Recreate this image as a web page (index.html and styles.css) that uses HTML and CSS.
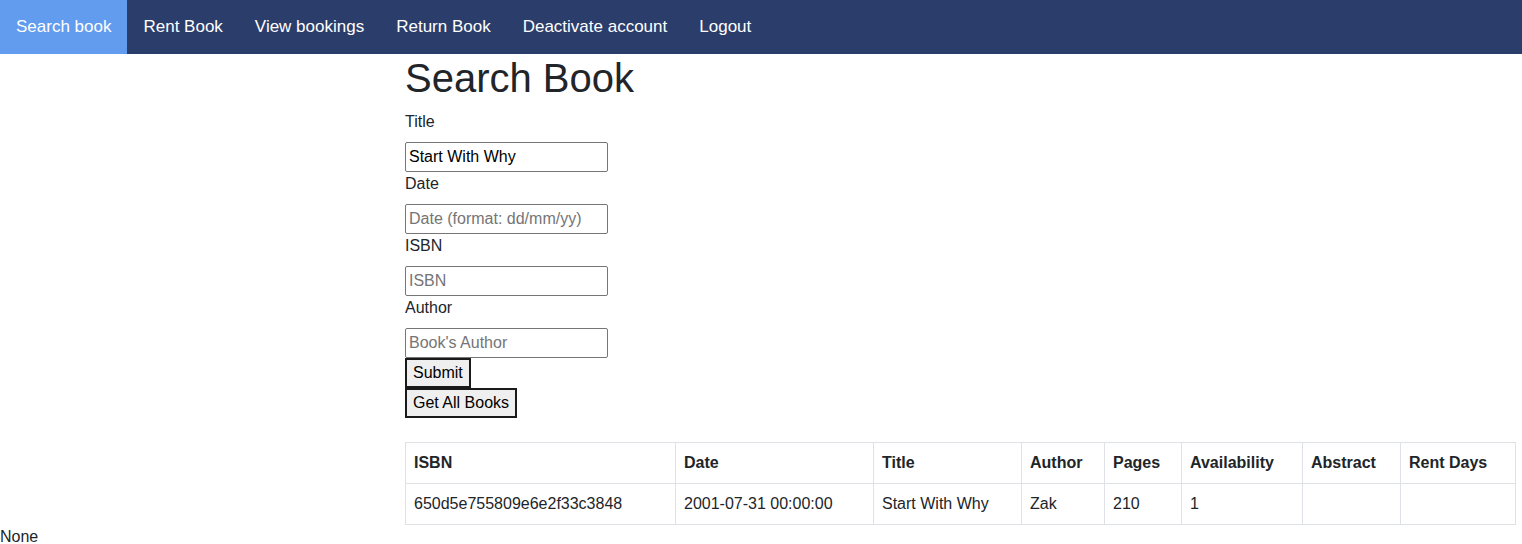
FILE: index.html
```html
<!DOCTYPE html>
<html>
<head>
<meta charset="utf-8">
<title>Search Book</title>
<link rel="stylesheet" href="styles.css">
</head>
<body>
<nav class="topnav">
  <a class="nav-item active" href="#">Search book</a>
  <a class="nav-item" href="#">Rent Book</a>
  <a class="nav-item" href="#">View bookings</a>
  <a class="nav-item" href="#">Return Book</a>
  <a class="nav-item" href="#">Deactivate account</a>
  <a class="nav-item" href="#">Logout</a>
</nav>
<main class="content">
  <h1 class="title">Search Book</h1>
  <form class="search-form">
    <label class="form-label">Title</label>
    <input class="field" type="text" value="Start With Why">
    <label class="form-label">Date</label>
    <input class="field" type="text" placeholder="Date (format: dd/mm/yy)">
    <label class="form-label">ISBN</label>
    <input class="field" type="text" placeholder="ISBN">
    <label class="form-label">Author</label>
    <input class="field" type="text" placeholder="Book's Author">
    <button class="btn" type="button">Submit</button>
    <button class="btn" type="button">Get All Books</button>
  </form>
  <table class="books">
    <thead>
      <tr>
        <th class="c-isbn">ISBN</th>
        <th class="c-date">Date</th>
        <th class="c-title">Title</th>
        <th class="c-author">Author</th>
        <th class="c-pages">Pages</th>
        <th class="c-avail">Availability</th>
        <th class="c-abstract">Abstract</th>
        <th class="c-rent">Rent Days</th>
      </tr>
    </thead>
    <tbody>
      <tr>
        <td>650d5e755809e6e2f33c3848</td>
        <td>2001-07-31 00:00:00</td>
        <td>Start With Why</td>
        <td>Zak</td>
        <td>210</td>
        <td>1</td>
        <td></td>
        <td></td>
      </tr>
    </tbody>
  </table>
</main>
<div class="footer-note">None</div>
</body>
</html>
```
FILE: styles.css
```css
* { box-sizing: border-box; }
html, body {
  margin: 0;
  padding: 0;
}
body {
  font-family: "Liberation Sans", Arial, sans-serif;
  font-size: 16px;
  line-height: 1.5;
  color: #212529;
  background: #fff;
}
.topnav {
  display: flex;
  height: 54px;
  background: #2b3d6b;
}
.nav-item {
  display: flex;
  align-items: center;
  padding: 0 16px;
  color: #fff;
  font-size: 17px;
  text-decoration: none;
}
.nav-item.active {
  background: #619cee;
}
.content {
  margin-left: 405px;
  width: 1110px;
}
.title {
  margin: 0 0 8px 0;
  font-size: 40px;
  font-weight: 400;
  line-height: 1.2;
}
.search-form {
  display: flex;
  flex-direction: column;
  align-items: flex-start;
}
.form-label {
  display: block;
  margin-bottom: 8px;
}
.field {
  width: 203px;
  height: 30px;
  padding: 1px 3px;
  border: 1px solid #767676;
  border-radius: 2px;
  font-family: inherit;
  font-size: 16px;
  line-height: 1.5;
  color: #000;
}
.field::placeholder {
  color: #757575;
}
.btn {
  height: 30px;
  padding: 1px 6px;
  border: 2px outset #333;
  border-color: #1a1a1a;
  border-style: solid;
  border-radius: 0;
  background: #efefef;
  font-family: inherit;
  font-size: 16px;
  line-height: 1.5;
  color: #000;
}
.books {
  margin-top: 24px;
  width: 1110px;
  border-collapse: collapse;
  table-layout: fixed;
}
.books th, .books td {
  border: 1px solid #dee2e6;
  padding: 8px;
  text-align: left;
  vertical-align: top;
  height: 41px;
}
.books th { font-weight: 700; }
.c-isbn { width: 270px; }
.c-date { width: 198px; }
.c-title { width: 148px; }
.c-author { width: 83px; }
.c-pages { width: 77px; }
.c-avail { width: 121px; }
.c-abstract { width: 98px; }
.c-rent { width: 115px; }
.footer-note {
  margin: 0;
}
```
